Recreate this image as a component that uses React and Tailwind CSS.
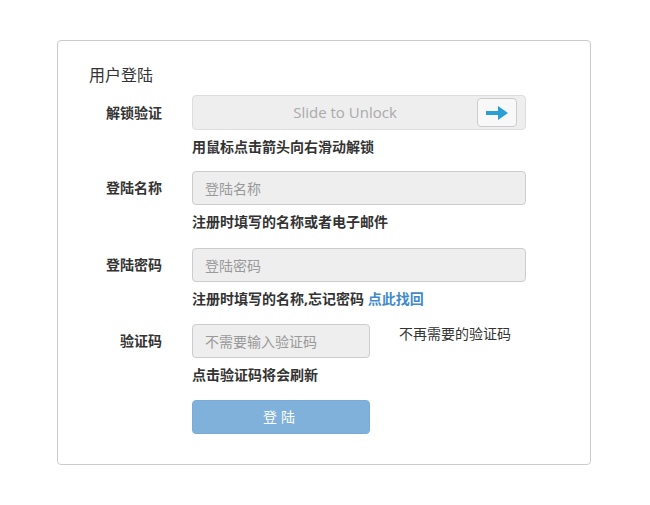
const FONT = 'font-["Open_Sans","Noto_Sans_CJK_SC",sans-serif]'

function Field({ label, children, help, labelClass = '' }) {
  return (
    <div className="flex">
      <div className={`w-[73px] shrink-0 text-right text-sm font-bold text-[#333] ${labelClass}`}>
        {label}
      </div>
      <div className="ml-[30px] min-w-0 flex-1">
        {children}
        {help && (
          <p className="mt-[7px] text-sm font-bold leading-5 text-[#333]">{help}</p>
        )}
      </div>
    </div>
  )
}

function TextInput({ placeholder, className = '' }) {
  return (
    <input
      disabled
      placeholder={placeholder}
      className={`block h-[34px] rounded border border-[#ccc] bg-[#eee] px-3 text-sm text-[#555] placeholder:text-[#999] ${className}`}
    />
  )
}

function SlideUnlock() {
  return (
    <div className="flex h-[35px] w-[334px] items-center rounded border border-[#ddd] bg-[#eee] pr-[8px]">
      <span className="flex-1 pl-[20px] text-center text-[15px] text-[#aaa]">Slide to Unlock</span>
      <button className="flex h-[29px] w-[40px] items-center justify-center rounded border border-[#ccc] bg-[#f8f8f8]">
        <svg width="22" height="14" viewBox="0 0 22 14">
          <path d="M0 5h12V0l10 7-10 7V9H0z" fill="#2a9fd6" />
        </svg>
      </button>
    </div>
  )
}

export default function App() {
  return (
    <div className={`min-h-[505px] bg-white pl-[57px] pt-[40px] ${FONT}`}>
      <div className="w-[534px] rounded border border-[#ccc] bg-white pb-[30px] pl-[31px] pt-[24px]">
        <h2 className="text-base leading-5 text-[#333]">用户登陆</h2>

        <div className="mt-[10px]">
          <Field label="解锁验证" labelClass="leading-[35px]" help="用鼠标点击箭头向右滑动解锁">
            <SlideUnlock />
          </Field>
        </div>

        <div className="mt-[14px]">
          <Field label="登陆名称" labelClass="leading-[34px]" help="注册时填写的名称或者电子邮件">
            <TextInput placeholder="登陆名称" className="w-[334px]" />
          </Field>
        </div>

        <div className="mt-[16px]">
          <Field
            label="登陆密码"
            labelClass="leading-[34px]"
            help={
              <>
                注册时填写的名称,忘记密码{' '}
                <a className="text-[#428bca]">点此找回</a>
              </>
            }
          >
            <TextInput placeholder="登陆密码" className="w-[334px]" />
          </Field>
        </div>

        <div className="mt-[15px]">
          <Field label="验证码" labelClass="leading-[34px]" help="点击验证码将会刷新">
            <div className="flex items-start">
              <TextInput placeholder="不需要输入验证码" className="w-[178px]" />
              <span className="ml-[29px] text-sm leading-5 text-[#333]">不再需要的验证码</span>
            </div>
          </Field>
        </div>

        <div className="mt-[15px] pl-[103px]">
          <button className="h-[34px] w-[178px] rounded border border-[#7aabd6] bg-[#80b1db] text-sm tracking-[4px] text-white">
            登陆
          </button>
        </div>
      </div>
    </div>
  )
}
